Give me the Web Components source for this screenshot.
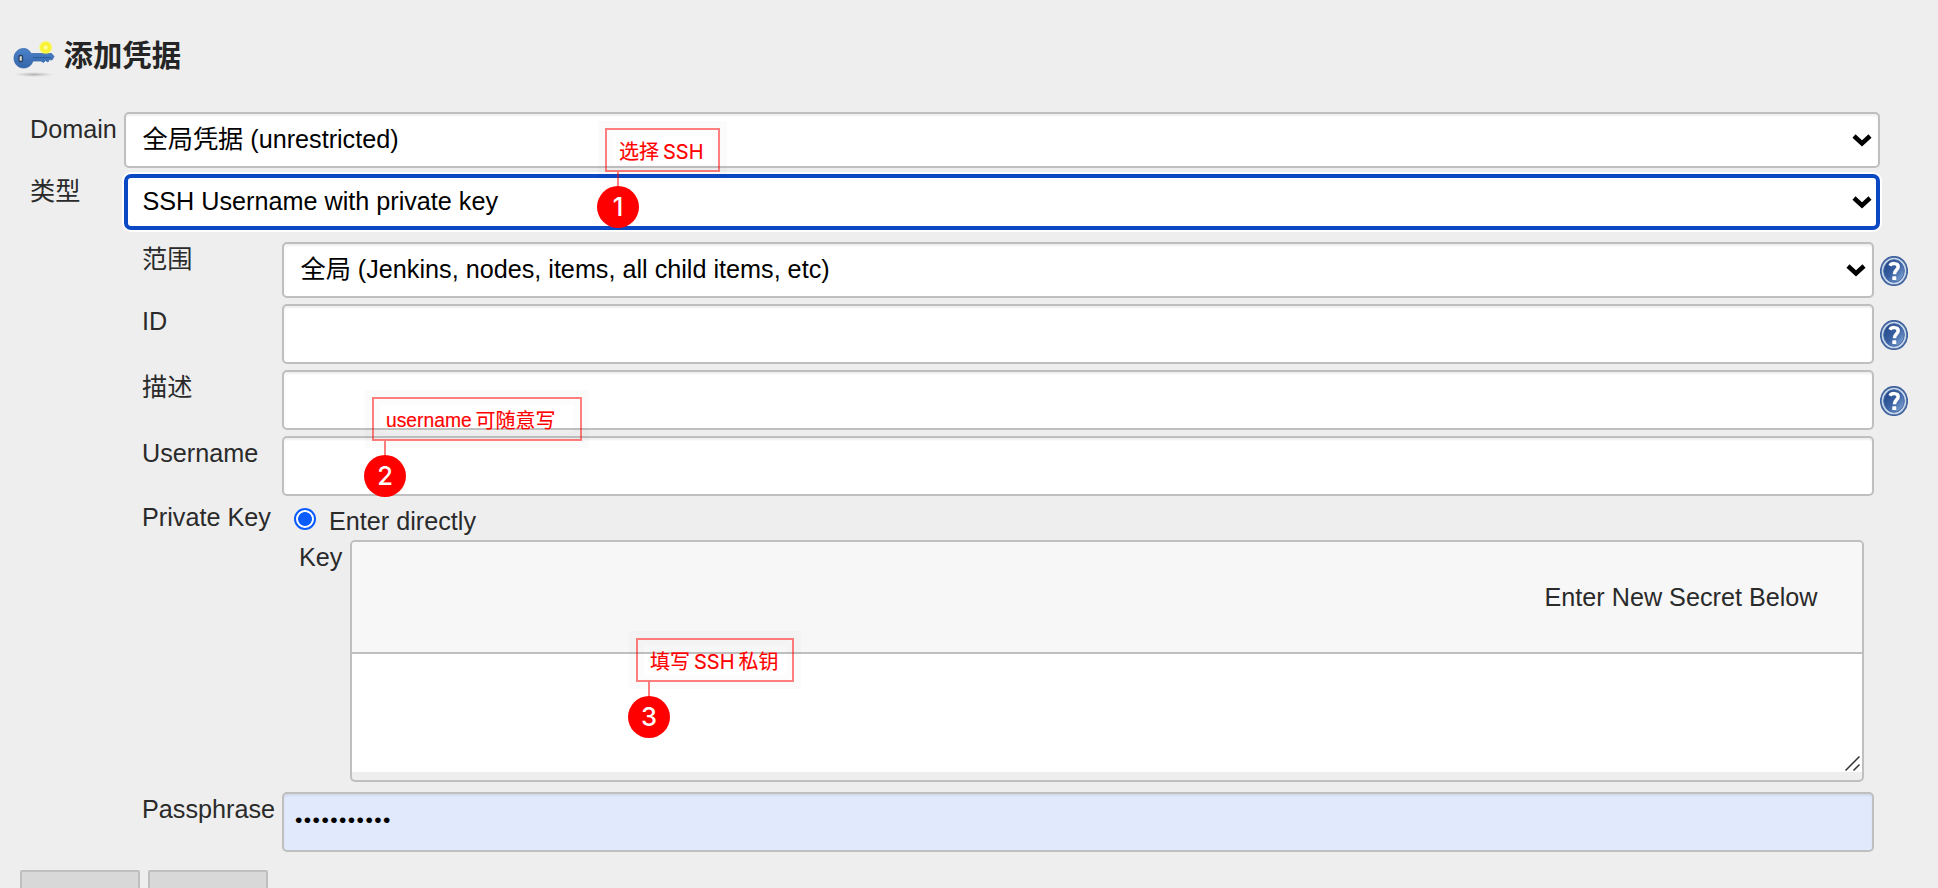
<!DOCTYPE html>
<html lang="zh-CN">
<head>
<meta charset="utf-8">
<title>添加凭据</title>
<style>
html,body{margin:0;height:100%;overflow:hidden}
body{background:#eee;color:#2a2a2a;font:25.2px/30px "Liberation Sans","Noto Sans CJK SC",sans-serif}
</style>
</head>
<body>
<credentials-page></credentials-page>
<script>
const define = (name, html, setup) => customElements.define(name, class extends HTMLElement {
  connectedCallback() {
    if (this.shadowRoot) return;
    const t = document.createElement('template');
    t.innerHTML = html;
    this.attachShadow({ mode: 'open' }).append(t.content.cloneNode(true));
    if (setup) setup(this, this.shadowRoot);
  }
});

define('key-icon', `
<style>:host{display:block;width:42px;height:38px}svg{display:block}</style>
<svg width="42" height="38" viewBox="0 0 42 38">
  <defs>
    <radialGradient id="s"><stop offset="0" stop-color="#999" stop-opacity=".75"/><stop offset="1" stop-color="#bbb" stop-opacity="0"/></radialGradient>
    <radialGradient id="g"><stop offset="0" stop-color="#fffbb0"/><stop offset=".25" stop-color="#fffa80"/><stop offset=".45" stop-color="#f7f02a"/><stop offset=".75" stop-color="#fbf53c"/><stop offset="1" stop-color="#fbf760" stop-opacity=".1"/></radialGradient>
    <linearGradient id="b" x2="0" y2="1"><stop offset="0" stop-color="#4b83cb"/><stop offset="1" stop-color="#3465a9"/></linearGradient>
  </defs>
  <ellipse cx="21" cy="34.5" rx="20" ry="2.6" fill="url(#s)"/>
  <path d="M18 13.5H38.5L41 16.5L39 20L36.5 19.5L35 22L32.5 20.5L30.5 22.5L28 21H20C18.500 25.500 15 28 10.500 28C5 28 1 23.500 1 18.200C1 13 5 8.500 10.500 8.500C14 8.500 17 10.500 18 13.500Z" fill="url(#b)" stroke="#3b6bae" stroke-width=".8"/>
  <path d="M20 17.500H38" stroke="#2d5b9b" stroke-width="1"/>
  <rect x="6" y="15.500" width="3.500" height="6" rx="1" fill="#d5d8d6" stroke="#28415f" stroke-width="1.300"/>
  <circle cx="32.700" cy="7.500" r="7" fill="url(#g)"/>
</svg>`);

define('help-icon', `
<style>:host{display:block;width:28px;height:30px;position:relative;top:1px}svg{display:block}</style>
<svg width="28" height="30" viewBox="0 0 28 30">
  <defs><linearGradient id="h" x1=".1" y1=".15" x2=".9" y2=".9"><stop offset="0" stop-color="#254a8c"/><stop offset=".5" stop-color="#3a61a3"/><stop offset="1" stop-color="#7fa3d4"/></linearGradient></defs>
  <ellipse cx="14" cy="15" rx="13.200" ry="14.200" fill="#c9d7ea" stroke="#41649f" stroke-width="1.800"/>
  <ellipse cx="14" cy="15" rx="10.300" ry="11.300" fill="url(#h)" stroke="#456aa6" stroke-width="1"/>
  <path d="M10 9.700C11.300 6.900 18.200 6.600 18.200 10.800C18.200 13.800 14.400 13.800 14.400 18.300" fill="none" stroke="#fff" stroke-width="3.500"/>
  <rect x="12.300" y="20.300" width="4" height="3.800" rx=".6" fill="#fff"/>
</svg>`);

define('form-row', `
<style>
:host{display:grid;grid-template-columns:var(--label,94px) minmax(0,1fr);margin-bottom:var(--gap,6px)}
.label{padding-top:2px;white-space:nowrap}
.field{display:flex;align-items:center;gap:6px}
::slotted(*){flex:1 1 0}
::slotted(help-icon){flex:none}
</style>
<div class="label"></div><div class="field"><slot></slot></div>`,
(el, root) => { root.querySelector('.label').textContent = el.getAttribute('label'); });

define('select-box', `
<style>
:host{box-sizing:border-box;display:flex;align-items:center;justify-content:space-between;height:56px;border:2px solid #bfbfbf;border-radius:5px;background:#fff;color:#000;padding:0 6px 0 16.500px;box-shadow:inset 0 2px 2px #0001}
:host([focused]){border:4px solid #0b48c4;border-radius:7px;padding:0 4px 0 14.500px;box-shadow:0 0 0 2px #fff}
span{white-space:nowrap;padding-bottom:2px}
svg{display:block}
</style>
<span><slot></slot></span>
<svg width="20" height="14" viewBox="0 0 20 14"><path d="M2 3L10 10.500L18 3" fill="none" stroke="#000" stroke-width="4.500"/></svg>`);

define('text-box', `
<style>
:host{display:block}
input{display:block;box-sizing:border-box;width:100%;height:60px;margin:0;border:2px solid #bfbfbf;border-radius:5px;background:var(--fill,#fff);color:#000;padding:0 11px 4px;font:inherit;font-size:21px;letter-spacing:1.450px;box-shadow:inset 0 2px 2px #0001;outline:0}
</style><input type="text">`,
(el, root) => { root.querySelector('input').value = el.getAttribute('value') || ''; });

define('radio-choice', `
<style>
:host{display:flex;height:36px;padding:8px 0 0 12px;box-sizing:border-box}
i{box-sizing:border-box;width:22px;height:22px;border:2px solid #0b5cff;border-radius:50%;background:radial-gradient(circle,#0b5cff 6.500px,#fff 7.300px)}
span{margin-left:13px;margin-top:-2px;white-space:nowrap}
</style><i></i><span><slot></slot></span>`);

define('secret-box', `
<style>
:host{display:block;box-sizing:border-box;height:242px;border:2px solid #bfbfbf;border-radius:5px;overflow:hidden}
header{height:110px;display:flex;align-items:center;justify-content:flex-end;background:#f7f7f7;border-bottom:2px solid #bfbfbf;padding-right:44.500px}
.area{height:118px;background:#fff;display:flex;align-items:flex-end;justify-content:flex-end}
svg{display:block;margin:0 2px 1px}
</style>
<header><span><slot></slot></span></header>
<div class="area"><svg width="15" height="15"><path d="M.5 14.500L14.500.5M8.500 14.500L14.500 8.500" stroke="#333" stroke-width="1.500"/></svg></div>`);

define('form-button', `
<style>:host{box-sizing:border-box;width:120px;height:48px;border:2px solid #bfbfbf;background:#d8d8d8;border-radius:2px}</style><slot></slot>`);

/* Numbered callout laid over the form; x, y and w give the box's place and width. */
define('note-pin', `
<style>
:host{position:absolute;height:44px;box-sizing:border-box;border:2px solid rgba(255,0,0,.5);box-shadow:0 0 0 7px rgba(0,0,0,.015),inset 0 0 0 6px rgba(0,0,0,.012);color:#f00;font-size:20px;line-height:24px;white-space:nowrap}
.text{display:flex;gap:4px;padding:10px 0 0 12px;-webkit-text-stroke:.15px #f00}
.stem{position:absolute;left:10px;top:42px;width:2px;height:16px;background:rgba(255,0,0,.5)}
.dot{position:absolute;left:-10px;top:56.400px;width:42px;height:42px;border-radius:50%;background:#f00;color:#fff;text-align:center;font:500 25.500px/42px Inter,sans-serif}
</style>
<div class="text"><slot></slot></div><div class="stem"></div><div class="dot"></div>`,
(el, root) => {
  el.style.left = el.getAttribute('x') + 'px';
  el.style.top = el.getAttribute('y') + 'px';
  el.style.width = el.getAttribute('w') + 'px';
  root.querySelector('.dot').textContent = el.getAttribute('n');
});

define('credentials-page', `
<style>
:host{display:block;position:relative;height:888px;overflow:hidden}
.title{display:flex;height:72px;padding:40px 0 0 13px;gap:8.500px}
h1{margin:0;font-size:29.400px;line-height:32px;font-weight:600;color:#252525}
form-row{margin-left:30px;margin-right:58px}
.inner{--label:140px;margin-left:142px;margin-right:64px}
.help{margin-right:30px}
.wide{--gap:12px}
.choice{--gap:4px;margin-top:-2px}
.secret{--label:51px;--gap:10px;margin-left:299px;margin-right:74px}
.auto{--fill:#e1eafd;--gap:18px}
.buttons{display:flex;gap:8px;padding-left:20px}
.u{font-size:19.300px;margin-right:-.3px}.s{font-family:Inter,sans-serif;font-size:20px}
</style>
<div class="title"><key-icon></key-icon><h1>添加凭据</h1></div>
<form-row label="Domain"><select-box>全局凭据 (unrestricted)</select-box></form-row>
<form-row class="wide" label="类型"><select-box focused>SSH Username with private key</select-box></form-row>
<form-row class="inner help" label="范围"><select-box>全局 (Jenkins, nodes, items, all child items, etc)</select-box><help-icon></help-icon></form-row>
<form-row class="inner help" label="ID"><text-box></text-box><help-icon></help-icon></form-row>
<form-row class="inner help" label="描述"><text-box></text-box><help-icon></help-icon></form-row>
<form-row class="inner" label="Username"><text-box></text-box></form-row>
<form-row class="inner choice" label="Private Key"><radio-choice>Enter directly</radio-choice></form-row>
<form-row class="secret" label="Key"><secret-box>Enter New Secret Below</secret-box></form-row>
<form-row class="inner auto" label="Passphrase"><text-box value="•••••••••••"></text-box></form-row>
<div class="buttons"><form-button></form-button><form-button></form-button></div>
<note-pin n="1" x="605" y="128" w="115"><span>选择</span><span class="s">SSH</span></note-pin>
<note-pin n="2" x="372" y="397" w="210"><span class="u">username</span><span>可随意写</span></note-pin>
<note-pin n="3" x="636" y="638" w="158"><span>填写</span><span class="s">SSH</span><span>私钥</span></note-pin>`);
</script>
</body>
</html>
